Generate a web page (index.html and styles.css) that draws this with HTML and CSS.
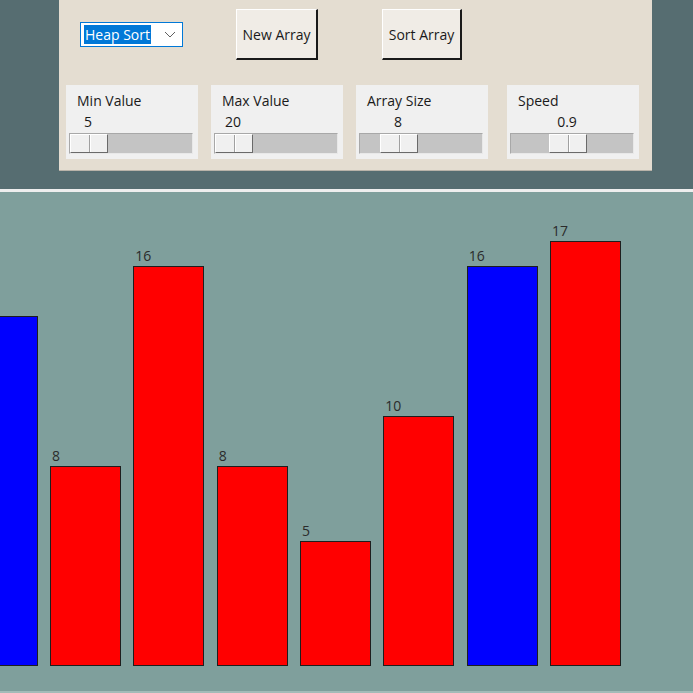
FILE: index.html
```html
<!DOCTYPE html>
<html lang="en">
<head>
    <meta charset="UTF-8">
    <meta name="viewport" content="width=device-width, initial-scale=1.0">
    <title>Sorting Visualizer</title>
    <link rel="stylesheet" href="styles.css">
</head>
<body>

<div class="header">
    <div class="panel">
        <div class="actions">
            <div class="combo">
                <span class="combo-text">Heap Sort</span>
                <svg class="chevron" width="12" height="7" viewBox="0 0 12 7">
                    <polyline points="1,1 6,6 11,1" fill="none" stroke="#606060" stroke-width="1"/>
                </svg>
            </div>
            <button class="btn btn-new">New Array</button>
            <button class="btn btn-sort">Sort Array</button>
        </div>

        <div class="sliders">
            <div class="slider-box">
                <div class="slider-label">Min Value</div>
                <div class="scale" style="--pos: 0px">
                    <div class="scale-value">5</div>
                    <div class="trough"><div class="thumb"></div></div>
                </div>
            </div>
            <div class="slider-box">
                <div class="slider-label">Max Value</div>
                <div class="scale" style="--pos: 0px">
                    <div class="scale-value">20</div>
                    <div class="trough"><div class="thumb"></div></div>
                </div>
            </div>
            <div class="slider-box">
                <div class="slider-label">Array Size</div>
                <div class="scale" style="--pos: 20px">
                    <div class="scale-value">8</div>
                    <div class="trough"><div class="thumb"></div></div>
                </div>
            </div>
            <div class="slider-box slider-speed">
                <div class="slider-label">Speed</div>
                <div class="scale" style="--pos: 38px">
                    <div class="scale-value">0.9</div>
                    <div class="trough"><div class="thumb"></div></div>
                </div>
            </div>
        </div>
    </div>
</div>

<div class="canvas">
    <div class="bars">
        <!-- first bar is scrolled partly out of view, its label with it -->
        <div class="bar-col first">
            <div class="bar-label"></div>
            <div class="bar blue" style="height: 350px"></div>
        </div>
        <div class="bar-col">
            <div class="bar-label">8</div>
            <div class="bar red" style="height: 200px"></div>
        </div>
        <div class="bar-col">
            <div class="bar-label">16</div>
            <div class="bar red" style="height: 400px"></div>
        </div>
        <div class="bar-col">
            <div class="bar-label">8</div>
            <div class="bar red" style="height: 200px"></div>
        </div>
        <div class="bar-col">
            <div class="bar-label">5</div>
            <div class="bar red" style="height: 125px"></div>
        </div>
        <div class="bar-col">
            <div class="bar-label">10</div>
            <div class="bar red" style="height: 250px"></div>
        </div>
        <div class="bar-col">
            <div class="bar-label">16</div>
            <div class="bar blue" style="height: 400px"></div>
        </div>
        <div class="bar-col">
            <div class="bar-label">17</div>
            <div class="bar red" style="height: 425px"></div>
        </div>
    </div>
</div>

</body>
</html>
```

FILE: styles.css
```css
body {
    margin: 0;
    background-color: #566d71;
    font-family: "Open Sans", "Noto Sans", sans-serif;
    font-size: 14px;
    color: #1a1a1a;
    overflow: hidden;
}
.header {
    height: 189px;
}
.panel {
    margin-left: 59px;
    width: 593px;
    height: 170px;
    background-color: #e4ddd1;
    border-bottom: 1px solid #b9b3a9;
}
.actions {
    display: flex;
    align-items: center;
    padding-top: 9px;
    height: 51px;
}
.combo {
    display: flex;
    align-items: center;
    justify-content: space-between;
    margin-left: 21px;
    width: 103px;
    height: 25px;
    box-sizing: border-box;
    background-color: #fff;
    border: 1px solid #0078d7;
    padding: 0 6px 0 3px;
}
.combo-text {
    background-color: #0078d7;
    color: #fff;
    line-height: 19px;
    padding: 0 1px;
    font-size: 14px;
}
.btn {
    height: 51px;
    box-sizing: border-box;
    background-color: #f0ece6;
    border: none;
    border-top: 1px solid #fff;
    border-left: 1px solid #fff;
    border-right: 2px solid #1a1a1a;
    border-bottom: 2px solid #1a1a1a;
    font-family: inherit;
    font-size: 14px;
    color: #1a1a1a;
    padding: 0;
}
.btn-new {
    margin-left: 53px;
    width: 82px;
}
.btn-sort {
    margin-left: 64px;
    width: 80px;
}
.sliders {
    display: flex;
    margin-top: 25px;
    padding-left: 7px;
}
.slider-box {
    width: 132px;
    height: 74px;
    margin-right: 13px;
    box-sizing: border-box;
    background-color: #f0f0f0;
    padding: 5px 5px 5px 3px;
}
.slider-box.slider-speed {
    margin-left: 6px;
    margin-right: 0;
}
.slider-label {
    padding-left: 8px;
    line-height: 21px;
}
.scale-value {
    width: 38px;
    margin-left: var(--pos);
    text-align: center;
    line-height: 22px;
}
.trough {
    height: 21px;
    box-sizing: border-box;
    background-color: #c4c4c4;
    border: 1px solid #a8a8a8;
    border-right-color: #e8e8e8;
    border-bottom-color: #e8e8e8;
}
.thumb {
    width: 38px;
    height: 19px;
    margin-left: var(--pos);
    box-sizing: border-box;
    background: linear-gradient(to right, transparent 18px, #a0a0a0 18px, #a0a0a0 19px, #fff 19px, #fff 20px, transparent 20px), #f0f0f0;
    border-top: 1px solid #fff;
    border-left: 1px solid #fff;
    border-right: 1px solid #6a6a6a;
    border-bottom: 1px solid #6a6a6a;
}
.canvas {
    height: 504px;
    box-sizing: border-box;
    background-color: #7f9f9c;
    border-top: 3px solid #eeeeee;
    border-bottom: 2px solid #a3bbb8;
    overflow: hidden;
}
.bars {
    display: flex;
    align-items: flex-end;
    gap: 12.33px;
    height: 100%;
    box-sizing: border-box;
    padding-bottom: 25px;
}
.bar-col {
    display: flex;
    flex-direction: column;
    flex-shrink: 0;
    width: 71px;
}
.bar-col.first {
    margin-left: -33.33px;
}
.bar-label {
    padding-left: 2px;
    height: 17px;
    line-height: 14px;
    color: #2b2b2b;
    font-size: 14px;
}
.bar {
    box-sizing: border-box;
    border: 1px solid #1e1e1e;
}
.red {
    background-color: #ff0000;
}
.blue {
    background-color: #0000ff;
}
```
